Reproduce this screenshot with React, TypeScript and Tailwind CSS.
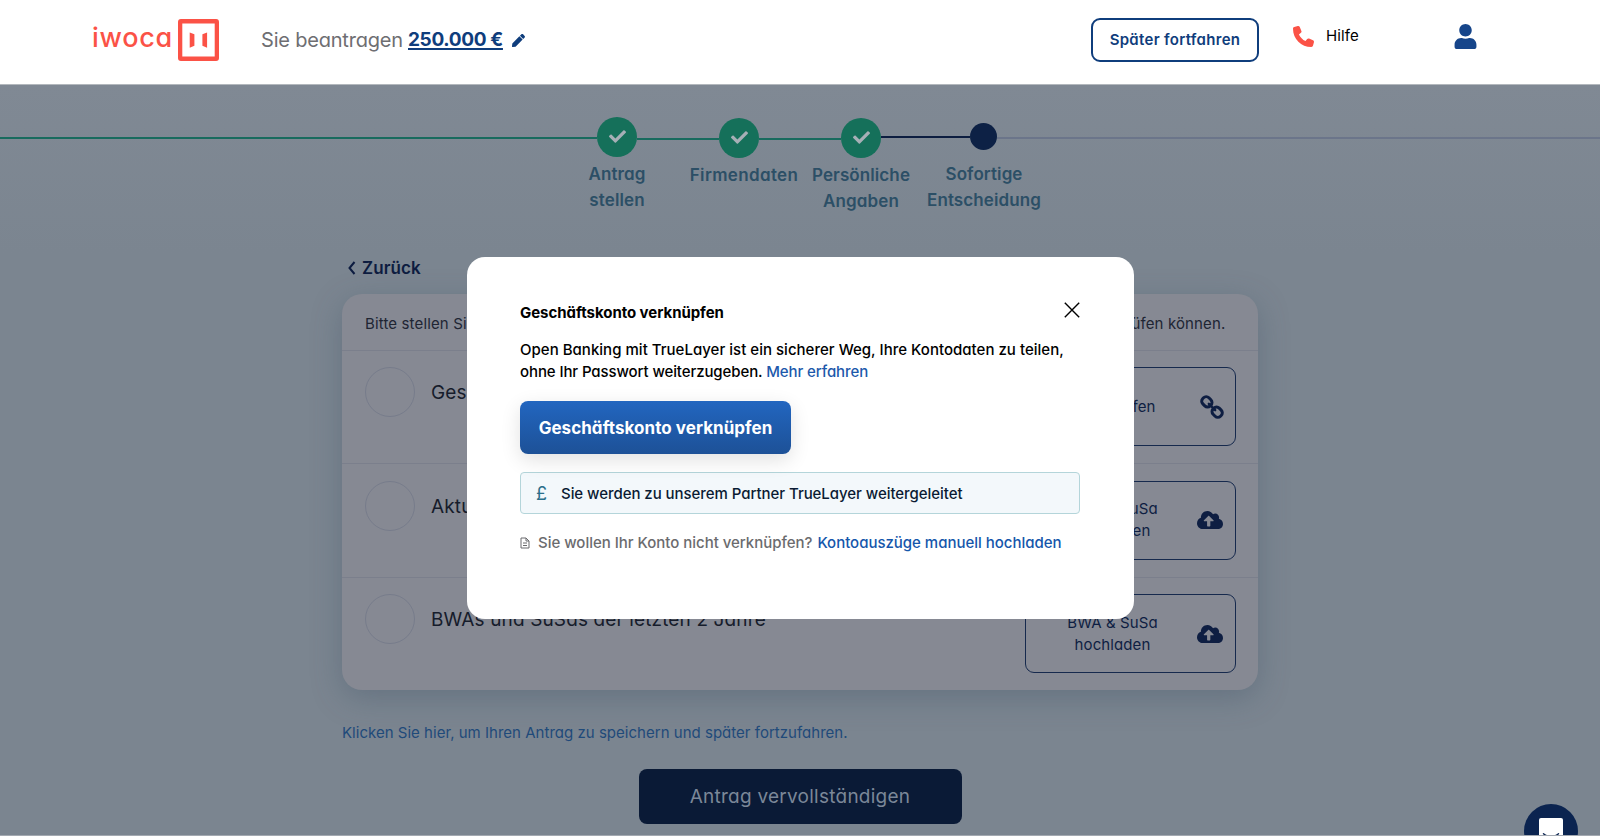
import type { ReactNode } from 'react'
import { FaCheck, FaCloudUploadAlt, FaUser, FaPen } from 'react-icons/fa'
import { FaPhone } from 'react-icons/fa6'

interface Step {
  label: string
  className: string
}

interface Requirement {
  title: string
  action: ReactNode
  icon: ReactNode
}

const steps: Step[] = [
  { label: 'Antrag stellen', className: '' },
  { label: 'Firmendaten', className: 'mt-px pl-[10px] tracking-[0.35px]' },
  { label: 'Persönliche Angaben', className: 'mt-px' },
  { label: 'Sofortige Entscheidung', className: 'pl-0.5' },
]

const requirements: Requirement[] = [
  { title: 'Geschäftskonto verknüpfen', action: 'Verknüpfen', icon: <ChainIcon /> },
  {
    title: 'Aktuelle BWA und SuSa',
    action: <>BWA &amp; SuSa<br />hochladen</>,
    icon: <FaCloudUploadAlt className="size-[26px]" />,
  },
  {
    title: 'BWAs und SuSas der letzten 2 Jahre',
    action: <>BWA &amp; SuSa<br />hochladen</>,
    icon: <FaCloudUploadAlt className="size-[26px]" />,
  },
]

function ChainIcon() {
  return (
    <svg viewBox="0 0 24 24" className="-mr-px size-6" fill="none" stroke="currentColor" strokeWidth="3">
      <g transform="rotate(45 12 12)">
        <rect x="-0.5" y="7.7" width="10.4" height="8.6" rx="3.8" />
        <rect x="14.1" y="7.7" width="10.4" height="8.6" rx="3.8" />
        <path d="M7.500 12h9" strokeLinecap="round" strokeWidth="2.4" />
      </g>
    </svg>
  )
}

function Logo() {
  return (
    <div className="flex items-start text-[#fb5246]">
      <span className="w-[86px] text-[27px] leading-[38px] font-medium tracking-[0.7px]">iwoca</span>
      <svg viewBox="0 0 42 42" className="h-[42px] w-[41px]" preserveAspectRatio="none">
        <rect x="2.2" y="2.2" width="37.6" height="37.6" rx="0.8" fill="none" stroke="currentColor" strokeWidth="4.4" />
        <path d="M12 13.500l4.800 1.800v11.400l-4.800 2zM29.800 13.500l-4.800 1.800v11.400l4.800 2z" fill="currentColor" />
      </svg>
    </div>
  )
}

function Header() {
  return (
    <header className="flex h-[85px] items-start border-b border-[#b3b8bd] bg-white pl-[92px]">
      <div className="mt-[19px]">
        <Logo />
      </div>
      <div className="mt-7 ml-[42px] flex h-6 items-center text-xl leading-6 whitespace-nowrap text-[#6e6e72]">
        <span className="w-[147px] tracking-[-0.2px]">Sie beantragen</span>
        <a className="w-[94px] text-[19px] font-bold tracking-[-0.35px] text-[#0f3d7c] underline decoration-2 underline-offset-2">250.000 €</a>
        <FaPen className="ml-[10px] size-[13px] text-[#0f3d7c]" />
      </div>
      <button className="mt-[18px] ml-auto h-11 w-[168px] rounded-[9px] border-2 border-[#0f3d7c] text-[15px] font-semibold tracking-[0.3px] whitespace-nowrap text-[#0f3d7c]">
        Später fortfahren
      </button>
      <div className="mt-6 ml-[34px] flex w-[128px] items-center text-black">
        <FaPhone className="mt-px size-[21px] text-[#fb5246]" />
        <span className="ml-3 leading-6">Hilfe</span>
      </div>
      <FaUser className="mt-6 mr-[122px] ml-[32px] size-[25px] text-[#16458a]" />
    </header>
  )
}

function DoneMark({ className }: { className?: string }) {
  return (
    <div className={`flex size-10 shrink-0 items-center justify-center rounded-full bg-[#15705a] text-[#a6afb6] ${className ?? ''}`}>
      <FaCheck className="-mt-0.5 size-[17px]" />
    </div>
  )
}

function Stepper() {
  return (
    <section className="h-[169px] bg-linear-to-b from-[#808994] to-[#7b8590] pt-8">
      <div className="flex h-[44px] items-start">
        <div className="mt-5 h-0.5 w-[597px] bg-[#186b5e]" />
        <DoneMark />
        <div className="mt-[21px] h-0.5 w-[82px] bg-[#186b5e]" />
        <DoneMark className="mt-px" />
        <div className="mt-[21px] h-0.5 w-[82px] bg-[#186b5e]" />
        <DoneMark className="mt-px" />
        <div className="mt-[19px] h-0.5 w-[89px] bg-[#0c1d40]" />
        <div className="mt-1.5 size-[27px] rounded-full bg-[#0d2145]" />
        <div className="mt-5 h-0.5 flex-1 bg-[#6b758a]" />
      </div>
      <div className="mx-auto grid w-[488px] grid-cols-4 text-center text-[17px] leading-[26px] font-semibold text-[#2c4f66]">
        {steps.map((step) => (
          <div key={step.label} className={step.className}>
            {step.label.split(' ').map((word) => (
              <div key={word} className="-mx-4">{word}</div>
            ))}
          </div>
        ))}
      </div>
    </section>
  )
}

function RequirementRow({ title, action, icon }: Requirement) {
  return (
    <li className="flex h-[113.5px] items-start border-t border-[#7b7f8c] pt-[16.5px] pr-[22px] pl-[23px]">
      <div className="size-[50px] rounded-full border border-[#777c8b]" />
      <span className="ml-4 text-[19px] leading-[51px] tracking-[0.13px] whitespace-nowrap text-[#161c2b]">{title}</span>
      <button className="ml-auto flex h-[79px] w-[211px] items-center rounded-[9px] border border-[#16294d] pr-3 text-[15px] leading-[22px] text-[#0e1e42]">
        <span className="flex-1 pl-0.5">{action}</span>
        {icon}
      </button>
    </li>
  )
}

function LinkModal() {
  return (
    <div role="dialog" className="absolute top-[257px] left-[467px] h-[362px] w-[667px] rounded-[18px] bg-white pt-[44px] pr-[54px] pl-[53px] text-black">
      <div className="flex items-start justify-between">
        <h2 className="mt-px leading-[22px] font-bold tracking-[-0.05px]">Geschäftskonto verknüpfen</h2>
        <button aria-label="Schließen" className="mt-px">
          <svg viewBox="0 0 16 16" className="size-4" stroke="currentColor" strokeWidth="1.4" fill="none">
            <path d="M0.8 0.8l14.4 14.4M15.2 0.8L0.8 15.2" />
          </svg>
        </button>
      </div>
      <p className="mt-[15px] leading-[22px] font-medium tracking-[0.02px] whitespace-nowrap">
        Open Banking mit TrueLayer ist ein sicherer Weg, Ihre Kontodaten zu teilen,
        <br />
        <span className="tracking-[-0.1px]">
          ohne Ihr Passwort weiterzugeben. <a className="text-[#1d59ab]">Mehr erfahren</a>
        </span>
      </p>
      <button className="mt-[18px] h-[53px] w-[271px] rounded-lg bg-linear-to-b from-[#2266c0] to-[#1d5197] pt-0.5 text-[17px] font-bold tracking-[0.05px] whitespace-nowrap text-white shadow-[0_6px_20px_rgba(0,0,0,0.12)]">
        Geschäftskonto verknüpfen
      </button>
      <div className="mt-[18px] flex h-[42px] items-center rounded border border-[#b4d5da] bg-[#f3f8fb] pt-0.5 pl-[15px] font-medium tracking-[-0.05px] text-[#0a1b33]">
        <span className="w-[25px] text-lg font-normal text-[#2b6f8a]">£</span>
        <span>Sie werden zu unserem Partner TrueLayer weitergeleitet</span>
      </div>
      <div className="mt-[17px] flex items-center leading-6 font-medium whitespace-nowrap text-[#6b6b6e]">
        <svg viewBox="0 0 10 12" className="mr-2 mb-px h-3 w-[10px] shrink-0" fill="none" stroke="currentColor">
          <path d="M1 1h5l3 3v7H1zM6 1v3h3M3 6h4M3 8.500h4" />
        </svg>
        <span className="tracking-[-0.02px]">Sie wollen Ihr Konto nicht verknüpfen?</span>
        <a className="ml-[5px] tracking-[-0.02px] text-[#1556ab]">Kontoauszüge manuell hochladen</a>
      </div>
    </div>
  )
}

export default function App() {
  return (
    <div className="relative h-[836px] w-[1600px] overflow-hidden border-b border-[#a3a9b1] bg-[#7b8590] font-['Inter','Liberation_Sans',sans-serif] text-[15px] tracking-[0.1px] [font-feature-settings:'cv11']">
      <Header />
      <Stepper />
      <main className="mx-auto w-[916px]">
        <a className="flex h-[26px] items-center pt-[3px] text-[17px] font-semibold text-[#0d1c40]">
          <svg viewBox="0 0 8 14" className="mr-1.5 mb-0.5 ml-1.5 h-[14px] w-2" fill="none" stroke="currentColor" strokeWidth="2">
            <path d="M6.500 1L1.500 7l5 6" />
          </svg>
          Zurück
        </a>
        <div className="mt-[14px] h-[396px] rounded-[20px] bg-[#868993] shadow-[0_8px_30px_rgba(60,80,100,0.35)]">
          <p className="ml-[23px] h-[55.5px] leading-[60px] tracking-[0.14px] whitespace-nowrap text-[#202533]">
            Bitte stellen Sie die folgenden Informationen und Unterlagen zur Verfügung, damit wir Ihren Antrag überprüfen können.
          </p>
          <ul>
            {requirements.map((item) => (
              <RequirementRow key={item.title} {...item} />
            ))}
          </ul>
        </div>
        <a className="mt-[31px] block leading-6 tracking-[0.02px] whitespace-nowrap text-[#1f4a7a]">
          Klicken Sie hier, um Ihren Antrag zu speichern und später fortzufahren.
        </a>
        <button className="mx-auto mt-6 block h-[55px] w-[323px] rounded-lg bg-[#0a1a36] pt-0.5 text-[19px] tracking-[0.25px] text-[#7b8798]">
          Antrag vervollständigen
        </button>
      </main>
      <LinkModal />
      {/* Chat launcher */}
      <div className="absolute top-[804px] left-[1524px] flex size-[54px] justify-center rounded-full bg-[#0b2450] pt-3.5">
        <svg viewBox="0 0 24 28" className="h-7 w-6">
          <path d="M2 0h20a2 2 0 0 1 2 2v26l-5-3H2a2 2 0 0 1-2-2V2a2 2 0 0 1 2-2z" fill="#fff" />
          <path d="M4.500 15.800c4 3.500 11 3.500 15 0" fill="none" stroke="#0b2450" strokeWidth="1.400" strokeLinecap="round" />
        </svg>
      </div>
    </div>
  )
}
